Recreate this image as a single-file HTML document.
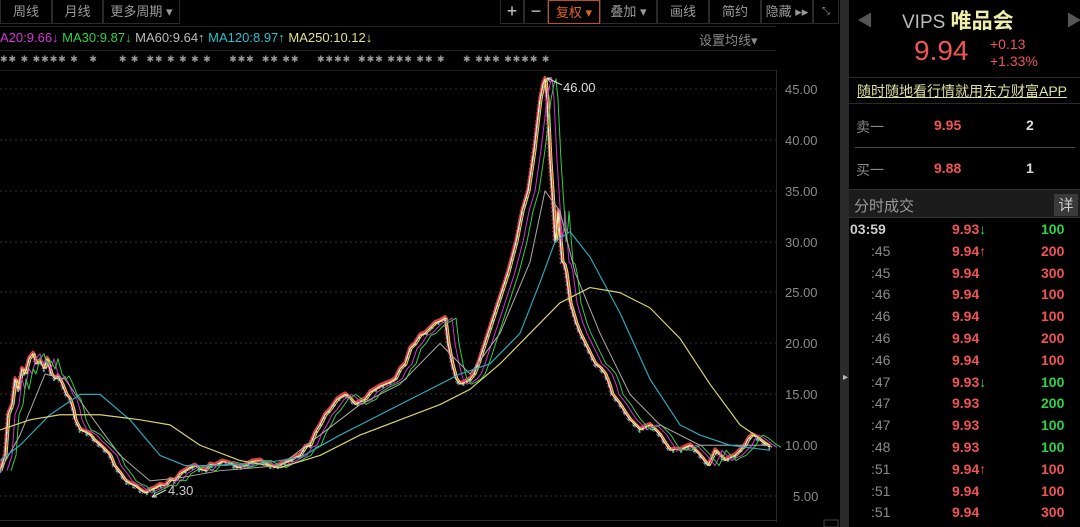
<!DOCTYPE html>
<html><head><meta charset="utf-8"><style>
*{margin:0;padding:0;box-sizing:border-box}
body{width:1080px;height:527px;background:#000;overflow:hidden;position:relative;font-family:"Liberation Sans","Noto Sans CJK SC",sans-serif;color:#aaa}
.a{position:absolute;white-space:nowrap}
.btn{position:absolute;top:0;height:24px;border:1px solid #2a2a2a;border-top:none;color:#9a9a9a;font-size:13px;line-height:23px;text-align:center}
.r{color:#f05454;font-weight:bold}
.g{color:#2fd24a;font-weight:bold}
.t{color:#8a8a8a}
</style></head><body>
<div class="btn" style="left:0;width:52px">周线</div>
<div class="btn" style="left:52px;width:51px">月线</div>
<div class="btn" style="left:103px;width:77px">更多周期 ▾</div>
<div class="btn" style="left:500px;width:24px;font-size:18px;color:#ccc">+</div>
<div class="btn" style="left:524px;width:24px;font-size:18px;color:#ccc">−</div>
<div class="btn" style="left:548px;width:52px;border:1px solid #c05020;color:#e0642a">复权 ▾</div>
<div class="btn" style="left:600px;width:57px">叠加 ▾</div>
<div class="btn" style="left:657px;width:52px">画线</div>
<div class="btn" style="left:709px;width:52px">简约</div>
<div class="btn" style="left:761px;width:52px">隐藏 ▸▸</div>
<div class="btn" style="left:813px;width:26px;font-size:10px">⤡</div>
<div class="a" style="left:0;top:26px;width:776px;height:1px;background:#222"></div>
<div class="a" style="left:0;top:30px;font-size:13px"><span style="color:#d636d6">A20:9.66↓</span> <span style="color:#2fd24a">MA30:9.87↓</span> <span style="color:#bbb">MA60:9.64↑</span> <span style="color:#25c2cc">MA120:8.97↑</span> <span style="color:#e4e08a">MA250:10.12↓</span></div>
<div class="a" style="left:699px;top:30px;font-size:13px;color:#8a8a8a">设置均线▾</div>
<div class="a" style="left:0;top:50px;width:776px;height:1px;background:#222"></div>
<div class="a" style="left:0;top:54px;font-size:9px;color:#999;letter-spacing:1px">✱✱ ✱ ✱✱✱✱ ✱ &nbsp; ✱ &nbsp;&nbsp;&nbsp;&nbsp; ✱ ✱ &nbsp;✱✱ ✱ ✱ ✱ ✱ &nbsp;&nbsp;&nbsp; ✱✱✱ &nbsp;✱✱ ✱✱ &nbsp;&nbsp;&nbsp; ✱✱✱✱ &nbsp;✱✱✱ ✱✱✱ ✱✱ ✱ &nbsp;&nbsp;&nbsp; ✱ ✱✱✱ ✱✱✱✱ ✱</div>
<div class="a" style="left:0;top:70px;width:776px;height:1px;background:#1a1a1a"></div>
<div class="a" style="left:776px;top:70px;width:1px;height:452px;background:#2a2a2a"></div>
<div class="a" style="left:0;top:520px;width:776px;height:1px;background:#2a2a2a"></div>
<svg class="a" style="left:0;top:0" width="840" height="527">
<g stroke="#333" stroke-dasharray="2 3" stroke-width="1">
<line x1="0" y1="89" x2="776" y2="89"/><line x1="0" y1="140" x2="776" y2="140"/><line x1="0" y1="191" x2="776" y2="191"/><line x1="0" y1="242" x2="776" y2="242"/><line x1="0" y1="292" x2="776" y2="292"/><line x1="0" y1="343" x2="776" y2="343"/><line x1="0" y1="394" x2="776" y2="394"/><line x1="0" y1="445" x2="776" y2="445"/><line x1="0" y1="496" x2="776" y2="496"/>
</g>
<g font-size="13" fill="#8a8a8a" font-family="Liberation Sans">
<text x="785" y="94">45.00</text><text x="785" y="145">40.00</text><text x="785" y="196">35.00</text><text x="785" y="247">30.00</text><text x="785" y="297">25.00</text><text x="785" y="348">20.00</text><text x="785" y="399">15.00</text><text x="785" y="450">10.00</text><text x="793" y="501">5.00</text>
</g>
<defs>
<path id="p" vector-effect="non-scaling-stroke" d="M0,7.5 L5,9 8,13 12,14 15,16.5 18,15.5 22,17.5 25,17 29,18.5 33,19 36,18 40,18.3 44,17.5 47,18.5 51,17 55,16.5 58,16.8 62,16 66,15 70,14.5 73,13.5 75,12.5 80,11.5 85,11.3 90,11 95,10.4 100,10 105,9.5 110,9 114,8 118,7.5 122,7 125,6.5 130,6.2 135,6 140,5.6 145,5.3 150,5.6 155,5.8 160,6.1 165,6 170,6.6 175,6.5 180,7.2 185,7.5 190,7.8 195,8 200,7.6 205,7.5 210,8.1 215,8 222,8.4 230,8.2 237,7.8 245,8 252,8.4 260,8.5 267,8.1 275,7.8 282,8.2 290,8.5 295,8.8 300,9 305,9.8 310,10 315,11.2 320,12 325,13 330,13.5 337,14.5 345,15 350,14.6 355,14 360,14.3 365,14.5 370,15.2 375,15.5 380,15.8 385,16 390,16.2 395,16.5 400,17.5 405,18 410,19.5 415,20 420,20.8 425,21 430,21.5 435,22 440,22.2 445,22.5 448,20 452,18 456,16.5 460,16 465,16.2 470,16.5 474,17 478,18 483,19.5 488,21 493,22.5 498,24 503,25.5 508,27 512,28.5 516,30 519,31.5 522,33 525,34 528,35 531,37 534,39 537,41.5 540,44 543,45.5 545,46 547,44 548,42 550,38 552,35 554,32 555,30 557,31.5 558,33 560,30.5 562,28 564,27.8 566,27 568,25.5 570,24 573,23 576,22 580,21 585,20 590,19 595,18 600,17.6 605,17 609,16 612,15 616,14.5 620,14 625,13.2 630,12.5 635,12 640,11.5 645,11.8 650,12 655,11.5 660,11 665,10.2 670,9.5 675,9.6 680,9.5 685,9.8 690,10 695,9.5 700,9 704,8.5 708,8 712,8.8 715,9.5 720,9 725,8.5 730,8.8 735,9 740,9.5 745,10 748,10.6 752,11 756,10.8 760,10.5 765,10.1 770,9.8"/>
</defs>
<g transform="translate(0,547) scale(1,-10.175)" fill="none" stroke-linejoin="round">
<use href="#p" stroke="#c03a3a" stroke-width="5" stroke-dasharray="1 3"/>
<use href="#p" stroke="#e04545" stroke-width="3" transform="translate(0,0.15)"/>
<use href="#p" stroke="#30c8d0" stroke-width="2" stroke-dasharray="2 6" transform="translate(0,-0.2)"/>
<use href="#p" stroke="#f0f0f0" stroke-width="1"/>
<use href="#p" stroke="#e8e040" stroke-width="1" transform="translate(2,0)"/>
<use href="#p" stroke="#d030d0" stroke-width="1" transform="translate(7,0)"/>
<use href="#p" stroke="#30d040" stroke-width="1" transform="translate(11,0)"/>
<polyline vector-effect="non-scaling-stroke" stroke="#b0a8a8" stroke-width="1" points="0,7.5 20,11 45,17 65,16.5 90,13 120,9 150,6.5 180,6.8 220,7.5 280,8 320,11 360,14 400,16 440,20 470,17 500,21 530,28 545,35 560,33 575,27 600,21 630,15 660,12 700,10 770,10"/>
<polyline vector-effect="non-scaling-stroke" stroke="#2aa8b8" stroke-width="1.2" points="0,8.5 20,10 50,13 80,15 100,15 130,12.5 160,9 185,8 215,8 260,8.2 300,8.8 340,11 380,13 420,15 460,17 490,18 520,21 540,26 555,30 570,31 590,28.5 620,23 650,16.5 680,12 700,11 730,10 770,9.5"/>
<polyline vector-effect="non-scaling-stroke" stroke="#d8d070" stroke-width="1.2" points="0,11.5 30,12.5 60,13 100,13 140,12.5 170,12 200,10 240,8.5 280,7.8 320,9 360,11 400,12.5 440,14 470,15.5 500,18 530,21 560,24 590,25.5 620,25 650,23.5 680,20.5 710,16 740,12 770,10"/>
</g>
<path d="M547,78 L562,85 M547,78 l5,0 M547,78 l3,4" stroke="#ddd" fill="none"/>
<text x="563" y="92" font-size="13" fill="#ddd">46.00</text>
<path d="M166,490 L152,497 M152,497 l5,0 M152,497 l3,-4" stroke="#ddd" fill="none"/>
<text x="168" y="495" font-size="13" fill="#ccc">4.30</text>
<rect x="824" y="520" width="14" height="7" fill="none" stroke="#444"/>
</svg>
<div class="a" style="left:840px;top:0;width:9px;height:527px;background:#2a2a2a"></div>
<div class="a" style="left:843px;top:372px;color:#bbb;font-size:10px">▸</div>
<div class="a" style="left:857px;top:7px;color:#555;font-size:16px">◀</div>
<div class="a" style="left:1066px;top:7px;color:#555;font-size:16px">▶</div>
<div class="a" style="left:902px;top:5px;font-size:19px;color:#bbb">VIPS <span style="color:#eeeeaa;font-weight:bold;font-size:21px">唯品会</span></div>
<div class="a" style="left:914px;top:35px;font-size:28px;color:#f05454">9.94</div>
<div class="a" style="left:990px;top:36px;font-size:14px;color:#f05454;line-height:17px">+0.13<br>+1.33%</div>
<div class="a" style="left:849px;top:77px;width:231px;height:1px;background:#2a2a2a"></div>
<div class="a" style="left:857px;top:81px;font-size:14px;color:#e0e0a0;text-decoration:underline">随时随地看行情就用东方财富APP</div>
<div class="a" style="left:849px;top:103px;width:231px;height:1px;background:#2a2a2a"></div>
<div class="a" style="left:856px;top:117px;font-size:14px;color:#888">卖一</div>
<div class="a r" style="left:934px;top:117px;font-size:14px">9.95</div>
<div class="a" style="left:1026px;top:117px;font-size:14px;color:#ddd;font-weight:bold">2</div>
<div class="a" style="left:855px;top:147px;width:220px;height:1px;background:#444"></div>
<div class="a" style="left:856px;top:160px;font-size:14px;color:#888">买一</div>
<div class="a r" style="left:934px;top:160px;font-size:14px">9.88</div>
<div class="a" style="left:1026px;top:160px;font-size:14px;color:#ddd;font-weight:bold">1</div>
<div class="a" style="left:849px;top:189px;width:231px;height:29px;background:#1c1c1c;border-top:1px solid #333;border-bottom:1px solid #333"></div>
<div class="a" style="left:854px;top:195px;font-size:15px;color:#999">分时成交</div>
<div class="a" style="left:1054px;top:194px;width:24px;height:22px;background:#3a3a3a;color:#ccc;font-size:15px;text-align:center">详</div>
<div class="a" style="left:849px;top:219px;font-size:14px;line-height:21.8px;width:231px">
<div style="position:relative;height:21.8px"><span style="position:absolute;left:1px;color:#ccc;font-weight:bold">03:59</span><span class="r" style="position:absolute;left:103px">9.93<span class="g">↓</span></span><span class="g" style="position:absolute;left:192px">100</span></div>
<div style="position:relative;height:21.8px"><span class="t" style="position:absolute;left:22px">:45</span><span class="r" style="position:absolute;left:103px">9.94↑</span><span class="r" style="position:absolute;left:192px">200</span></div>
<div style="position:relative;height:21.8px"><span class="t" style="position:absolute;left:22px">:45</span><span class="r" style="position:absolute;left:103px">9.94</span><span class="r" style="position:absolute;left:192px">300</span></div>
<div style="position:relative;height:21.8px"><span class="t" style="position:absolute;left:22px">:46</span><span class="r" style="position:absolute;left:103px">9.94</span><span class="r" style="position:absolute;left:192px">100</span></div>
<div style="position:relative;height:21.8px"><span class="t" style="position:absolute;left:22px">:46</span><span class="r" style="position:absolute;left:103px">9.94</span><span class="r" style="position:absolute;left:192px">100</span></div>
<div style="position:relative;height:21.8px"><span class="t" style="position:absolute;left:22px">:46</span><span class="r" style="position:absolute;left:103px">9.94</span><span class="r" style="position:absolute;left:192px">200</span></div>
<div style="position:relative;height:21.8px"><span class="t" style="position:absolute;left:22px">:46</span><span class="r" style="position:absolute;left:103px">9.94</span><span class="r" style="position:absolute;left:192px">100</span></div>
<div style="position:relative;height:21.8px"><span class="t" style="position:absolute;left:22px">:47</span><span class="r" style="position:absolute;left:103px">9.93<span class="g">↓</span></span><span class="g" style="position:absolute;left:192px">100</span></div>
<div style="position:relative;height:21.8px"><span class="t" style="position:absolute;left:22px">:47</span><span class="r" style="position:absolute;left:103px">9.93</span><span class="g" style="position:absolute;left:192px">200</span></div>
<div style="position:relative;height:21.8px"><span class="t" style="position:absolute;left:22px">:47</span><span class="r" style="position:absolute;left:103px">9.93</span><span class="g" style="position:absolute;left:192px">100</span></div>
<div style="position:relative;height:21.8px"><span class="t" style="position:absolute;left:22px">:48</span><span class="r" style="position:absolute;left:103px">9.93</span><span class="g" style="position:absolute;left:192px">100</span></div>
<div style="position:relative;height:21.8px"><span class="t" style="position:absolute;left:22px">:51</span><span class="r" style="position:absolute;left:103px">9.94↑</span><span class="r" style="position:absolute;left:192px">100</span></div>
<div style="position:relative;height:21.8px"><span class="t" style="position:absolute;left:22px">:51</span><span class="r" style="position:absolute;left:103px">9.94</span><span class="r" style="position:absolute;left:192px">100</span></div>
<div style="position:relative;height:21.8px"><span class="t" style="position:absolute;left:22px">:51</span><span class="r" style="position:absolute;left:103px">9.94</span><span class="r" style="position:absolute;left:192px">300</span></div>
</div>
</body></html>
